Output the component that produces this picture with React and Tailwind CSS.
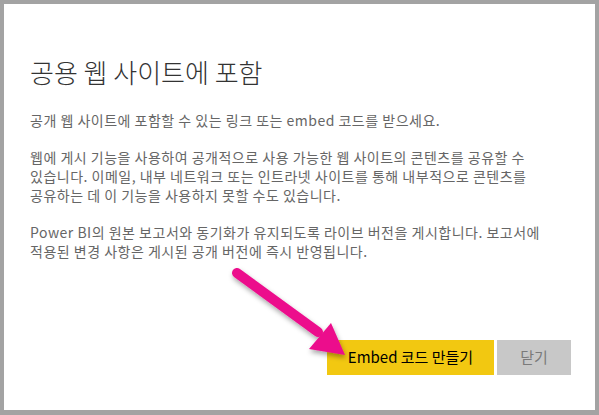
import React from "react";

export default function App() {
  const font = { fontFamily: '"Noto Sans CJK KR", "Noto Sans", sans-serif' };
  return (
    <div className="w-[599px] h-[415px] bg-[#a3a3a3] pt-[4px] pl-[4px] pr-[4px] pb-[5px]" style={font}>
      <div className="relative w-full h-full bg-white pl-[26px] pr-[24px] flex flex-col">
        <h1 className="mt-[52px] text-[26px] leading-[32px] text-[#333333] font-light whitespace-nowrap">
          공용 웹 사이트에 포함
        </h1>
        <div className="mt-[23px] text-[14px] leading-[19px] tracking-[0.5px] text-[#666666] whitespace-nowrap">
          <p>공개 웹 사이트에 포함할 수 있는 링크 또는 embed 코드를 받으세요.</p>
          <p className="mt-[18px]">
            웹에 게시 기능을 사용하여 공개적으로 사용 가능한 웹 사이트의 콘텐츠를 공유할 수
            <br />
            있습니다. 이메일, 내부 네트워크 또는 인트라넷 사이트를 통해 내부적으로 콘텐츠를
            <br />
            공유하는 데 이 기능을 사용하지 못할 수도 있습니다.
          </p>
          <p className="mt-[18px]">
            Power BI의 원본 보고서와 동기화가 유지되도록 라이브 버전을 게시합니다. 보고서에
            <br />
            적용된 변경 사항은 게시된 공개 버전에 즉시 반영됩니다.
          </p>
        </div>
        <div className="mt-auto mb-[35px] flex justify-end gap-[3px]">
          <button className="w-[167px] h-[35px] bg-[#f2c811] text-[15px] text-black">
            Embed 코드 만들기
          </button>
          <button className="w-[74px] h-[35px] bg-[#c8c8c8] text-[15px] text-[#7a7a7a]">
            닫기
          </button>
        </div>
        <svg
          className="absolute left-0 top-0 pointer-events-none"
          width="595"
          height="406"
          viewBox="0 0 595 406"
        >
          <defs>
            <filter id="sh" x="-20%" y="-20%" width="140%" height="140%">
              <feDropShadow dx="1" dy="3" stdDeviation="2.5" floodColor="#000" floodOpacity="0.35" />
            </filter>
          </defs>
          <g filter="url(#sh)" transform="translate(-4,-4)">
            <line x1="237" y1="273" x2="318" y2="332" stroke="#ec0c8c" strokeWidth="10" strokeLinecap="round" />
            <polygon points="309,349 331,323 345,355" fill="#ec0c8c" />
          </g>
        </svg>
      </div>
    </div>
  );
}
